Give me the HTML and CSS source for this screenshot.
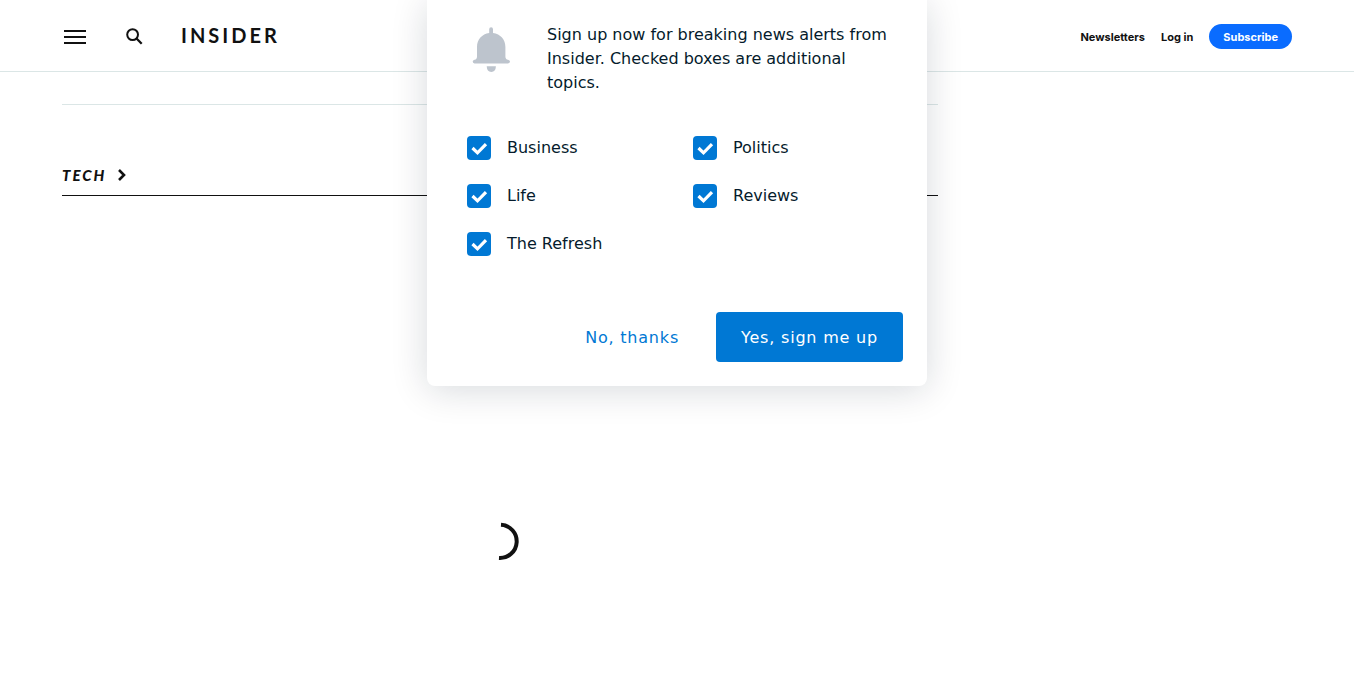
FILE: index.html
```html
<!DOCTYPE html>
<html lang="en">
<head>
<meta charset="utf-8">
<title>Tech - Insider</title>
<link rel="stylesheet" href="styles.css">
</head>
<body>
<header class="masthead">
  <button class="icon-button menu-button" aria-label="Menu">
    <svg width="22" height="16" viewBox="0 0 22 16"><path d="M0 2h22M0 8h22M0 14h22" stroke="#111" stroke-width="2"/></svg>
  </button>
  <button class="icon-button search-button" aria-label="Search">
    <svg width="17" height="17" viewBox="0 0 17 17" fill="none" stroke="#111" stroke-width="2"><circle cx="6.6" cy="6.6" r="5.4"/><path d="M10.3 10.3l5.4 5.4" stroke-width="2.3"/></svg>
  </button>
  <a class="logo" href="#">INSIDER</a>
  <nav class="account">
    <a href="#">Newsletters</a>
    <a href="#">Log in</a>
    <a class="subscribe" href="#">Subscribe</a>
  </nav>
</header>
<main class="content">
  <div class="feed">
    <h1 class="section-title"><a href="#">TECH
      <svg width="8" height="12" viewBox="0 0 8 12"><path d="M1 1L6 6l-5 5" fill="none" stroke="#111" stroke-width="2.6"/></svg></a></h1>
    <div class="loading" role="status" aria-label="Loading">
      <svg width="40" height="40" viewBox="0 0 40 40"><path d="M21 3.700A16.600 16.600 0 0 1 19 37" fill="none" stroke="#111" stroke-width="4"/></svg>
    </div>
  </div>
</main>
<form class="prompt" role="dialog" aria-label="Breaking news alerts">
  <div class="prompt-intro">
    <svg class="bell" width="38" height="46" viewBox="0 0 38 46" fill="#bdc4cd"><path d="M17.2 6V2.2a1.9 1.9 0 0 1 3.8 0V6C28.5 7 33.400 12.500 33.400 20V29.500Q33.400 32.500 36 32.700Q38 33 38 34.600Q38 36.400 36 36.400H2.500Q.7 36.400 .7 34.600Q.7 33 2.500 32.700Q5 32.500 5 29.500V20C5 12.500 10 7 17.200 6Z"/><path d="M14.700 39.300h9.200Q23.700 45 19.300 45Q14.900 45 14.700 39.300Z"/></svg>
    <p>Sign up now for breaking news alerts from Insider. Checked boxes are additional topics.</p>
  </div>
  <div class="topics">
    <label class="topic"><input type="checkbox" checked>Business</label>
    <label class="topic"><input type="checkbox" checked>Politics</label>
    <label class="topic"><input type="checkbox" checked>Life</label>
    <label class="topic"><input type="checkbox" checked>Reviews</label>
    <label class="topic"><input type="checkbox" checked>The Refresh</label>
  </div>
  <div class="actions">
    <button class="decline" type="button">No, thanks</button>
    <button class="accept" type="button">Yes, sign me up</button>
  </div>
</form>
</body>
</html>
```

FILE: styles.css
```css
* { box-sizing: border-box; }

body {
  position: relative;
  margin: 0 12px 0 0;
  background: #fff;
  color: #111;
  font-family: Inter, sans-serif;
}

a { color: inherit; text-decoration: none; }

.masthead {
  display: flex;
  align-items: center;
  height: 72px;
  padding: 2px 62px 0;
  border-bottom: 1px solid #dbe6e6;
}

.icon-button {
  display: flex;
  padding: 2px;
  border: 0;
  background: none;
}

.search-button { margin-left: 36px; }

.logo {
  margin: 0 0 4px 36px;
  font: 700 20px/24px Lato, sans-serif;
  letter-spacing: 3px;
}

.account {
  display: flex;
  align-items: center;
  gap: 16px;
  margin-left: auto;
  font-size: 11px;
  font-weight: 700;
}

.subscribe {
  padding: 1px 14px 0;
  border-radius: 13px;
  background: #0a6cff;
  color: #fff;
  line-height: 24px;
}

.content { padding: 32px 62px; }

.feed {
  max-width: 876px;
  border-top: 1px solid #dbe6e6;
}

.section-title {
  margin: 58px 0 0;
  padding-bottom: 8px;
  border-bottom: 1px solid #111;
  font: italic 900 15px/24px Lato, sans-serif;
  letter-spacing: 2px;
}

.section-title a {
  display: flex;
  align-items: center;
  gap: 12px;
}

.loading {
  display: flex;
  justify-content: center;
  padding-top: 325px;
}

.prompt {
  position: absolute;
  top: 0;
  left: 50%;
  width: 500px;
  margin-left: -250px;
  padding: 23px 24px 24px;
  border-radius: 0 0 8px 8px;
  background: #fff;
  box-shadow: 0 4px 36px rgba(5, 27, 44, 0.16);
  color: #051b2c;
  font: 16px/24px "DejaVu Sans", sans-serif;
}

.prompt-intro {
  display: flex;
  gap: 37px;
  padding-left: 21px;
}

.prompt-intro p { flex: 1; margin: 0; }

.bell { flex: none; margin-top: 4px; }

.topics {
  display: grid;
  grid-template-columns: 1fr 1fr;
  gap: 24px 16px;
  padding: 41px 0 56px 16px;
}

.topic {
  display: flex;
  align-items: center;
  gap: 16px;
}

.topic input {
  appearance: none;
  width: 24px;
  height: 24px;
  margin: 0;
  border-radius: 4px;
  background: #0078d4 url("data:image/svg+xml,%3Csvg xmlns='http://www.w3.org/2000/svg' viewBox='0 0 24 24'%3E%3Cpath d='M5.500 12l5 4.800L19 8.200' fill='none' stroke='white' stroke-width='3.2'/%3E%3C/svg%3E") center / 24px;
}

.actions {
  display: flex;
  justify-content: flex-end;
  gap: 12px;
}

.actions button {
  height: 50px;
  padding: 2px 25px 0;
  border: 0;
  border-radius: 4px;
  font: inherit;
  letter-spacing: 0.05em;
}

.decline { background: none; color: #0078d4; }

.accept { background: #0078d4; color: #fff; }
```
